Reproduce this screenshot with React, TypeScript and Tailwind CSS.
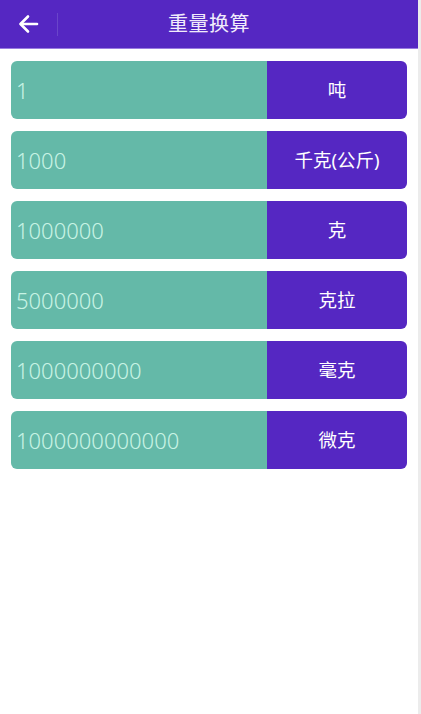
import React from "react";

const rows = [
  { v: "1", u: "吨" },
  { v: "1000", u: "千克(公斤)" },
  { v: "1000000", u: "克" },
  { v: "5000000", u: "克拉" },
  { v: "1000000000", u: "毫克" },
  { v: "1000000000000", u: "微克" },
];

export default function App() {
  return (
    <div
      className="flex h-[714px] w-[421px] bg-white"
      style={{ fontFamily: '"Noto Sans", Roboto, "Noto Sans CJK SC", sans-serif' }}
    >
      <div className="flex w-[418px] flex-col">
        <div className="relative flex h-[49px] items-center bg-[#5527c2] border-b border-[#9a7be0]">
          <div className="flex w-[58px] items-center justify-center pl-[1px] border-r border-[#6a45ca] h-[23px]">
            <svg width="22" height="20" viewBox="0 0 22 20" fill="none" stroke="white" strokeWidth="2.6" strokeLinecap="round" strokeLinejoin="round">
              <path d="M19 10H3" />
              <path d="M10 2.5L2.5 10L10 17.5" />
            </svg>
          </div>
          <div className="absolute left-0 right-0 top-0 bottom-0 flex items-center justify-center pointer-events-none">
            <span className="text-[20px] text-[#f1ecfb] tracking-[0.5px]">重量换算</span>
          </div>
        </div>
        <div className="flex flex-col gap-[12px] px-[11px] pt-[12px]">
          {rows.map((r) => (
            <div key={r.u} className="flex h-[58px] overflow-hidden rounded-[6px]">
              <div className="flex w-[256px] items-center bg-[#64b9a8] pl-[5px] text-[22px] font-light text-[#c8f3e4]">
                {r.v}
              </div>
              <div className="flex flex-1 items-center justify-center bg-[#5527c2] text-[18.5px] text-white">
                {r.u}
              </div>
            </div>
          ))}
        </div>
      </div>
      <div className="w-[3px] bg-[#ececec]" />
    </div>
  );
}
